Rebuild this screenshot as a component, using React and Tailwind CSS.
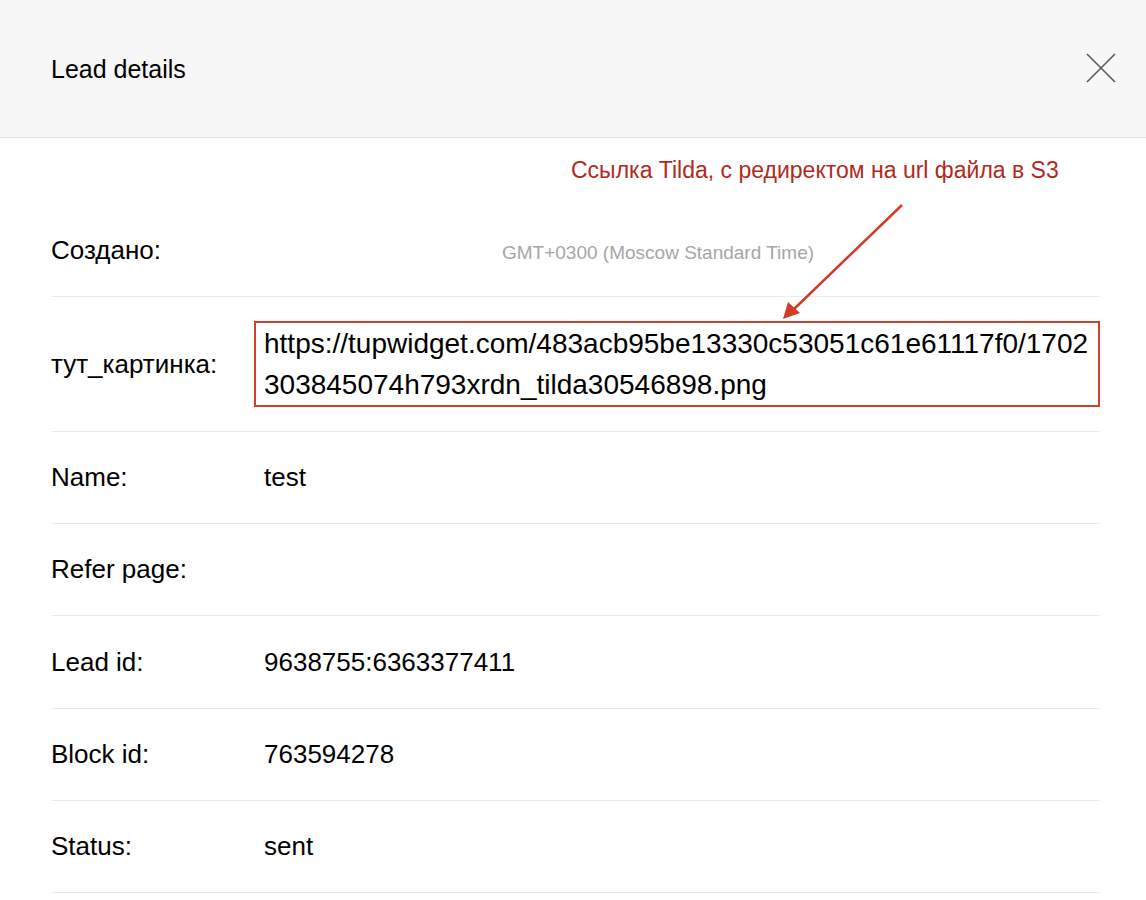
const rows = [
  { label: "Name:", value: "test", height: "h-[92px]" },
  { label: "Refer page:", value: "", height: "h-[92px]" },
  { label: "Lead id:", value: "9638755:6363377411", height: "h-[93px]" },
  { label: "Block id:", value: "763594278", height: "h-[92px]" },
  { label: "Status:", value: "sent", height: "h-[92px]" },
];

function CloseIcon() {
  return (
    <svg width="32" height="32" viewBox="0 0 32 32" fill="none">
      <path d="M2 2L30 30M30 2L2 30" stroke="#5a5a5a" strokeWidth="1.6" />
    </svg>
  );
}

function Row({ label, children, height = "h-[92px]" }) {
  return (
    <div className={`flex items-center border-b border-[#ebebeb] ${height}`}>
      <div className="w-[213px] shrink-0 text-[26px] text-black">{label}</div>
      <div className="flex-1 text-[26px] text-black">{children}</div>
    </div>
  );
}

export default function App() {
  return (
    <div
      className="relative w-full min-h-[900px] bg-white overflow-hidden"
      style={{ fontFamily: '"Liberation Sans", Arial, sans-serif' }}
    >
      <header className="flex h-[138px] items-center justify-between border-b border-[#e3e3e3] bg-[#f7f7f7] pl-[51px] pr-[29px]">
        <h1 className="mt-[3px] text-[25px] font-normal text-black">Lead details</h1>
        <button className="mb-[2px]">
          <CloseIcon />
        </button>
      </header>

      <div className="pl-[51px] pr-[46px] pt-[67px]">
        <Row label="Создано:">
          <span className="ml-[238px] text-[19px] text-[#a6a6a6]">GMT+0300 (Moscow Standard Time)</span>
        </Row>

        <Row label="тут_картинка:" height="h-[135px]">
          <div className="-ml-[10px] border-2 border-[#d2402c] pl-[8px] text-[28px] leading-[41px]">
            <div className="whitespace-nowrap">https://tupwidget.com/483acb95be13330c53051c61e61117f0/1702</div>
            <div className="whitespace-nowrap">303845074h793xrdn_tilda30546898.png</div>
          </div>
        </Row>

        {rows.map((r) => (
          <Row key={r.label} label={r.label} height={r.height}>
            {r.value}
          </Row>
        ))}
      </div>

      {/* annotation overlay */}
      <div className="absolute left-[571px] top-[153px] whitespace-nowrap text-[23px] text-[#b3291b]">
        Ссылка Tilda, с редиректом на url файла в S3
      </div>
      <svg className="absolute left-0 top-0" width="1146" height="900" style={{ pointerEvents: "none" }}>
        <line x1="902" y1="205" x2="793" y2="310" stroke="#d13b27" strokeWidth="2.5" />
        <polygon points="783,319 788,302 800,313" fill="#d13b27" />
      </svg>
    </div>
  );
}
